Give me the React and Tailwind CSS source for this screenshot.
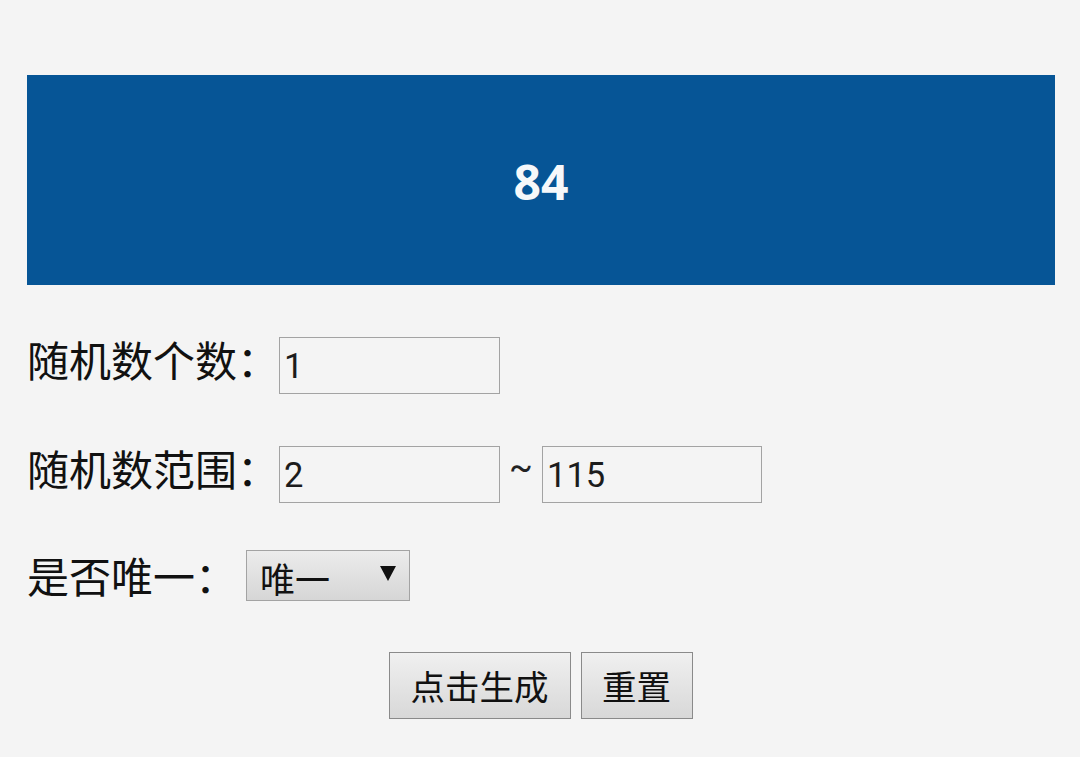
import React, { useState } from 'react';

const font = "font-['Roboto','Noto_Sans_CJK_SC',sans-serif]";
const field = 'h-[57px] border border-[#a3a3a3] bg-transparent pl-[4px] text-[34.5px] text-[#1c1c1c] outline-none';
const btn = 'h-[67px] border border-[#8a8a8a] bg-gradient-to-b from-[#f0f0f0] to-[#d8d8d8] pt-[7px] text-[34.5px] text-[#111]';
const label = 'whitespace-nowrap text-[42px] leading-none';

export default function App() {
  const [count, setCount] = useState('1');
  const [min, setMin] = useState('2');
  const [max, setMax] = useState('115');

  return (
    <div className={`${font} h-[757px] overflow-hidden bg-[#f4f4f4] pl-[27px] pr-[25px] pt-[75px] text-[#111]`}>
      <div className="flex h-[210px] items-center justify-center bg-[#065596] pt-[3px] font-['Open_Sans'] text-[48px] font-bold text-[#f6f8fa]">
        84
      </div>

      <div className="mt-[52px] flex h-[57px] items-center">
        <span className={`${label} w-[252px] pb-[6px]`}>随机数个数：</span>
        <input className={`${field} w-[221px]`} value={count} onChange={e => setCount(e.target.value)} />
      </div>

      <div className="mt-[52px] flex h-[57px] items-center">
        <span className={`${label} w-[252px] pb-[6px]`}>随机数范围：</span>
        <input className={`${field} w-[221px]`} value={min} onChange={e => setMin(e.target.value)} />
        <span className="w-[42px] pb-[14px] text-center text-[35px] leading-none text-[#222]">~</span>
        <input className={`${field} w-[220px]`} value={max} onChange={e => setMax(e.target.value)} />
      </div>

      <div className="mt-[47px] flex h-[51px] items-center">
        <span className={`${label} w-[219px] pt-[6px]`}>是否唯一：</span>
        <div className="flex h-[51px] w-[164px] justify-between border border-[#a3a3a3] bg-gradient-to-b from-[#ececec] to-[#d6d6d6] pl-[13px] pr-[13px]">
          <span className="pt-[11px] text-[35px] leading-[40px]">唯一</span>
          <svg width="16" height="16" viewBox="0 0 16 16" className="mt-[15px]">
            <polygon points="0,0 16,0 8,15" fill="#111" />
          </svg>
        </div>
      </div>

      <div className="mt-[51px] flex justify-center gap-[10px] pr-[1px]">
        <button className={`${btn} w-[182px]`}>点击生成</button>
        <button className={`${btn} w-[112px]`}>重置</button>
      </div>
    </div>
  );
}
